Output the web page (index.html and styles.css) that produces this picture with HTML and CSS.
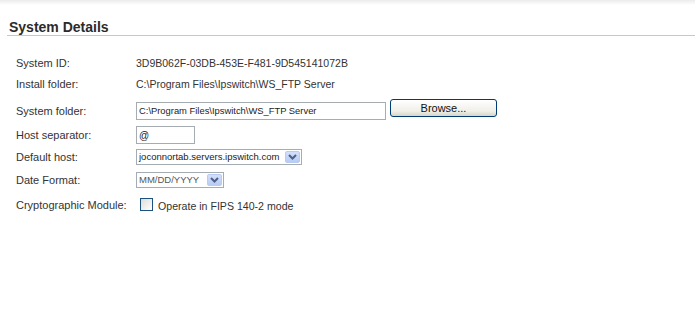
FILE: index.html
```html
<!DOCTYPE html>
<html lang="en">
<head>
    <meta charset="UTF-8">
    <title>System Details</title>
    <link rel="stylesheet" href="styles.css">
</head>
<body>
    <div class="top-band"></div>

    <h2 class="section-title">System Details</h2>

    <div class="details-form">
        <div class="label">System ID:</div>
        <div class="value">3D9B062F-03DB-453E-F481-9D545141072B</div>

        <div class="label">Install folder:</div>
        <div class="value">C:\Program Files\Ipswitch\WS_FTP Server</div>

        <div class="label label-low">System folder:</div>
        <div class="value">
            <input class="text-input folder-input" type="text" value="C:\Program Files\Ipswitch\WS_FTP Server">
            <button class="button">Browse...</button>
        </div>

        <div class="label">Host separator:</div>
        <div class="value">
            <input class="text-input separator-input" type="text" value="@">
        </div>

        <div class="label">Default host:</div>
        <div class="value">
            <div class="select host-select">
                <span class="select-text">joconnortab.servers.ipswitch.com</span>
                <span class="select-arrow">
                    <svg width="9" height="6" viewBox="0 0 9 6"><path d="M1 1 L4.5 4.5 L8 1" fill="none" stroke="#4d6185" stroke-width="2"/></svg>
                </span>
            </div>
        </div>

        <div class="label">Date Format:</div>
        <div class="value">
            <div class="select date-select">
                <span class="select-text muted">MM/DD/YYYY</span>
                <span class="select-arrow">
                    <svg width="9" height="6" viewBox="0 0 9 6"><path d="M1 1 L4.5 4.5 L8 1" fill="none" stroke="#4d6185" stroke-width="2"/></svg>
                </span>
            </div>
        </div>

        <div class="label">Cryptographic Module:</div>
        <div class="value">
            <label class="check">
                <span class="check-box"></span>
                <span class="check-text">Operate in FIPS 140-2 mode</span>
            </label>
        </div>
    </div>
</body>
</html>
```

FILE: styles.css
```css
* {
    margin: 0;
    padding: 0;
    box-sizing: border-box;
}

body {
    background: #ffffff;
    color: #333333;
    font-family: 'Liberation Sans', Arial, sans-serif;
    font-size: 11px;
}

.top-band {
    height: 5px;
    background: linear-gradient(#ebebeb, #ffffff);
}

.section-title {
    margin: 14px 0 0 7px;
    padding-left: 2px;
    height: 17px;
    line-height: 16px;
    font-size: 14px;
    font-weight: bold;
    color: #2b2b2b;
    border-bottom: 1px solid #c8c8c8;
}

.details-form {
    display: grid;
    grid-template-columns: 120px 1fr;
    grid-template-rows: 21px 22px 29px 22px 22px 24px 25px;
    margin-top: 16px;
    padding-left: 16px;
    align-items: center;
}

.label,
.value {
    line-height: 14px;
}

.label-low {
    padding-top: 2px;
}

.value {
    display: flex;
    align-items: center;
    font-size: 10.5px;
}

.text-input {
    height: 18px;
    border: 1px solid #a5acb2;
    padding: 0 2px;
    font-family: 'Liberation Sans', Arial, sans-serif;
    font-size: 9.4px;
    color: #222222;
    background: #ffffff;
    outline: none;
}

.folder-input {
    width: 250px;
    margin-top: 2px;
}

.separator-input {
    width: 59px;
    font-size: 10px;
}

.button {
    width: 107px;
    height: 18px;
    margin-left: 4px;
    margin-bottom: 3px;
    border: 1px solid #003c74;
    border-radius: 3px;
    background: linear-gradient(#ffffff, #f0efe8 70%, #d8d5c8);
    font-family: 'Liberation Sans', Arial, sans-serif;
    font-size: 11px;
    color: #111111;
    line-height: 14px;
}

.select {
    display: flex;
    align-items: center;
    justify-content: space-between;
    height: 16px;
    border: 1px solid #a5acb2;
    padding: 0 1px 0 2px;
    background: #ffffff;
}

.host-select {
    width: 166px;
}

.date-select {
    width: 88px;
}

.select-text {
    font-size: 9.5px;
    color: #222222;
}

.select-text.muted {
    color: #555555;
}

.select-arrow {
    display: flex;
    align-items: center;
    justify-content: center;
    width: 15px;
    height: 12px;
    border: 1px solid #b9cbf2;
    border-radius: 2px;
    background: linear-gradient(#d3e0fb, #b7cbf4);
}

.check {
    display: flex;
    align-items: center;
    margin-left: 4px;
}

.check-box {
    width: 13px;
    height: 13px;
    border: 1px solid #1c5180;
    background: linear-gradient(135deg, #dcdcd7, #ffffff);
}

.check-text {
    margin-left: 5px;
    font-size: 10.6px;
    padding-top: 3px;
}
```
